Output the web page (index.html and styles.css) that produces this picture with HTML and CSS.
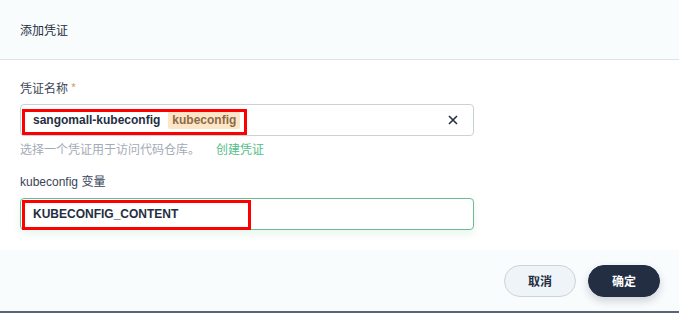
FILE: index.html
```html
<!DOCTYPE html>
<html lang="zh">
<head>
<meta charset="utf-8">
<link rel="stylesheet" href="styles.css">
</head>
<body>
<div class="dialog">
  <div class="header">添加凭证</div>
  <div class="body">
    <div class="label">凭证名称 <span class="req">*</span></div>
    <div class="input select">
      <span class="value">sangomall-kubeconfig</span>
      <span class="tag">kubeconfig</span>
      <svg class="clear" width="12" height="12" viewBox="0 0 12 12"><path d="M2 2L10 10M10 2L2 10" stroke="#242e42" stroke-width="1.6" fill="none"/></svg>
      <div class="mark mark1"></div>
    </div>
    <div class="help">选择一个凭证用于访问代码仓库。<a class="link">创建凭证</a></div>
    <div class="label label2">kubeconfig 变量</div>
    <div class="input focus">
      <span class="value">KUBECONFIG_CONTENT</span>
      <div class="mark mark2"></div>
    </div>
  </div>
  <div class="footer">
    <button class="btn cancel">取消</button>
    <button class="btn ok">确定</button>
  </div>
</div>
</body>
</html>
```

FILE: styles.css
```css
html, body {
  margin: 0;
  padding: 0;
  background: #ffffff;
}
body {
  font-family: "Liberation Sans", "Noto Sans CJK SC", sans-serif;
  color: #242e42;
}
.dialog {
  width: 679px;
  height: 313px;
  display: flex;
  flex-direction: column;
  background: #fff;
}
.header {
  height: 59px;
  border-bottom: 1px solid #dde3e8;
  background: #f9fcfd;
  display: flex;
  align-items: center;
  padding-left: 20px;
  font-family: "Noto Sans CJK SC", sans-serif;
  font-size: 12px;
  color: #242e42;
}
.body {
  padding: 20px 205px 20px 20px;
  display: flex;
  flex-direction: column;
}
.label {
  font-family: "Noto Sans CJK SC", sans-serif;
  font-size: 12px;
  line-height: 16px;
  color: #3a4558;
  margin-bottom: 8px;
}
.label2 {
  font-family: "Liberation Sans", "Noto Sans CJK SC", sans-serif;
  margin-top: 17px;
}
.req {
  color: #d8a268;
}
.input {
  position: relative;
  height: 32px;
  box-sizing: border-box;
  border: 1px solid #c9d1d9;
  border-radius: 4px;
  display: flex;
  align-items: center;
  padding-left: 12px;
  padding-right: 14px;
  background: #fff;
}
.input.focus {
  border-color: #6dbb94;
  box-shadow: 0 4px 8px rgba(85, 188, 138, 0.14);
}
.value {
  font-size: 12px;
  font-weight: bold;
  color: #242e42;
}
.tag {
  margin-left: 8px;
  background: #fde6c8;
  color: #8c6a44;
  font-size: 12px;
  font-weight: bold;
  line-height: 14px;
  padding: 2px 4px 2px 4px;
  border-radius: 2px;
}
.clear {
  margin-left: auto;
}
.mark {
  position: absolute;
  border: 3px solid #ff0000;
  box-sizing: border-box;
}
.mark1 {
  left: 1px;
  top: 4px;
  width: 225px;
  height: 26px;
}
.mark2 {
  left: 1px;
  top: 1px;
  width: 229px;
  height: 30px;
}
.help {
  margin-top: 5px;
  font-family: "Noto Sans CJK SC", sans-serif;
  font-size: 12px;
  line-height: 16px;
  color: #a3abb6;
}
.link {
  margin-left: 16px;
  color: #55bc8a;
}
.footer {
  flex: 1;
  background: #f9fcfd;
  border-bottom: 2px solid #5b6475;
  display: flex;
  align-items: center;
  justify-content: flex-end;
  padding-right: 19px;
  gap: 12px;
}
.btn {
  width: 72px;
  height: 32px;
  border-radius: 16px;
  font-family: "Noto Sans CJK SC", sans-serif;
  font-size: 12px;
  font-weight: bold;
  cursor: pointer;
}
.cancel {
  background: #eff4f8;
  border: 1px solid #ccd3db;
  color: #242e42;
}
.ok {
  background: #242e42;
  border: 1px solid #242e42;
  color: #ffffff;
  box-shadow: 0 4px 8px rgba(36, 46, 66, 0.2);
}
```
